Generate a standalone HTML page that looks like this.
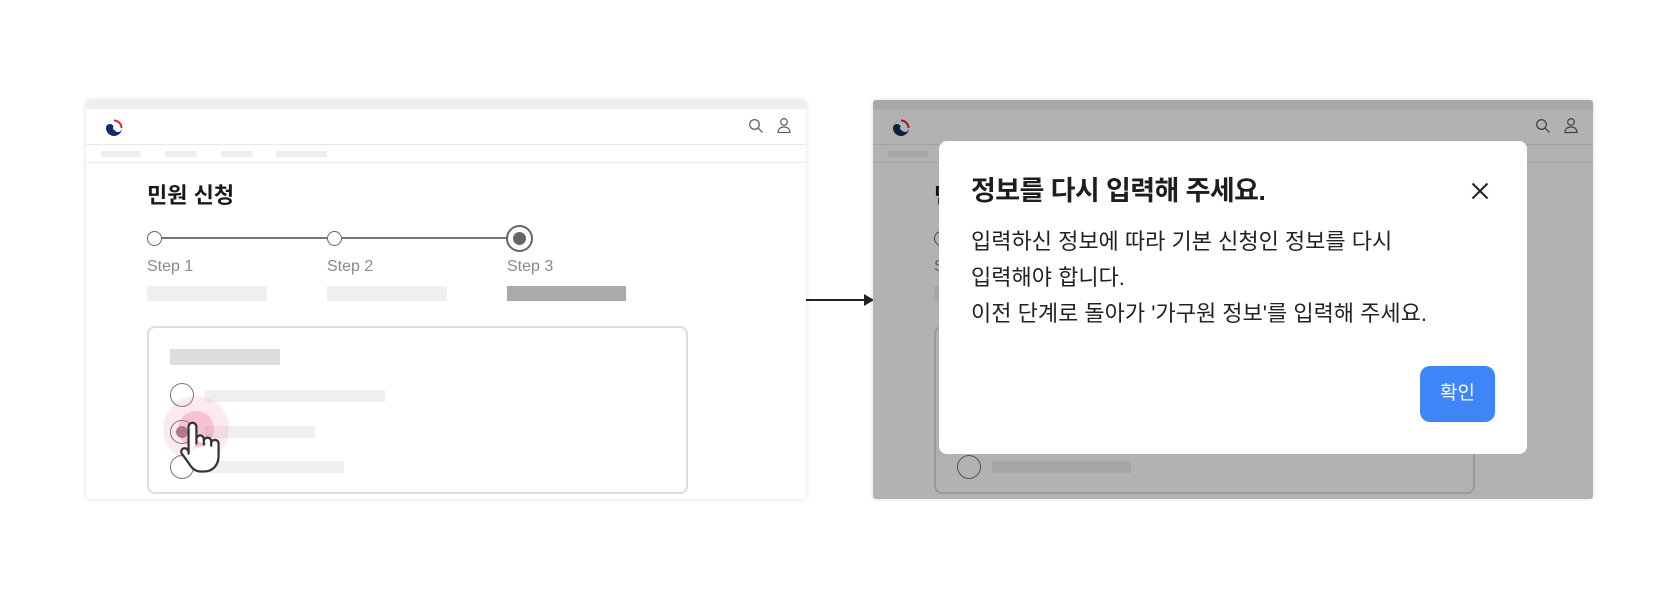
<!DOCTYPE html>
<html><head><meta charset="utf-8"><style>
*{margin:0;padding:0;box-sizing:border-box}
body{width:1680px;height:600px;background:#fff;position:relative;overflow:hidden;font-family:"Liberation Sans","Noto Sans CJK KR",sans-serif}
.panel{position:absolute;top:100px;width:720px;height:399px;background:#fff;box-shadow:0 0 6px rgba(0,0,0,.12);border-radius:3px;overflow:hidden}
.a{position:absolute}
.bar{position:absolute;background:#eee}
.rad{position:absolute;width:24px;height:24px;border:1.5px solid #777;border-radius:50%;background:#fff}
.lbl{position:absolute;top:158px;font-size:16px;color:#8a8a8a}
.ov{position:absolute;inset:0;background:rgba(0,0,0,.3)}
</style></head><body>

<div class="panel" style="left:86px">
  <div class="a" style="left:0;top:0;width:720px;height:9px;background:#efefef"></div>
  <div class="a" style="left:0;top:44px;width:720px;height:1px;background:#e8e8e8"></div>
  <div class="a" style="left:0;top:62px;width:720px;height:1px;background:#e8e8e8"></div>
  <svg class="a" style="left:19px;top:19px" width="18" height="18" viewBox="0 0 18 18"><circle cx="9" cy="9" r="8" fill="#0f2f66"/><path d="M9 1a8 8 0 0 1 8 8a4 4 0 0 1-8 0a4 4 0 0 0-8 0a8 8 0 0 1 8-8z" fill="#fff"/><path d="M9 1.5a7.5 7.5 0 0 1 7.5 7.5" stroke="#d42a3d" stroke-width="2" fill="none"/><circle cx="10.5" cy="9" r="2.5" fill="#fff"/></svg>
  <svg class="a" style="left:662px;top:18px" width="16" height="16" viewBox="0 0 16 16" fill="none" stroke="#666" stroke-width="1.3"><circle cx="6.5" cy="6.5" r="4.8"/><path d="M10 10l4.5 4.5"/></svg>
  <svg class="a" style="left:690px;top:17px" width="16" height="17" viewBox="0 0 16 17" fill="none" stroke="#666" stroke-width="1.3"><circle cx="8" cy="5" r="3.3"/><path d="M2 15.5c0-3.5 2.5-5.5 6-5.5s6 2 6 5.5z"/></svg>
  <div class="bar" style="left:15px;top:51px;width:40px;height:6px"></div>
  <div class="bar" style="left:79px;top:51px;width:32px;height:6px"></div>
  <div class="bar" style="left:135px;top:51px;width:32px;height:6px"></div>
  <div class="bar" style="left:190px;top:51px;width:51px;height:6px"></div>
  <div class="a" style="left:61px;top:82px;font-size:22px;font-weight:bold;color:#1a1a1a;line-height:28px">민원 신청</div>
  <div class="a" style="left:68px;top:137px;width:365px;height:2px;background:#777"></div>
  <div class="a" style="left:61px;top:131px;width:15px;height:15px;border:1.5px solid #666;border-radius:50%;background:#fff"></div>
  <div class="a" style="left:241px;top:131px;width:15px;height:15px;border:1.5px solid #666;border-radius:50%;background:#fff"></div>
  <div class="a" style="left:420px;top:125px;width:27px;height:27px;border:2px solid #666;border-radius:50%;background:#fff"></div>
  <div class="a" style="left:427px;top:132px;width:13px;height:13px;border-radius:50%;background:#666"></div>
  <div class="lbl" style="left:61px">Step 1</div>
  <div class="lbl" style="left:241px">Step 2</div>
  <div class="lbl" style="left:421px">Step 3</div>
  <div class="bar" style="left:61px;top:186px;width:120px;height:15px;background:#efefef"></div>
  <div class="bar" style="left:241px;top:186px;width:120px;height:15px;background:#efefef"></div>
  <div class="bar" style="left:421px;top:186px;width:119px;height:15px;background:#aaa"></div>
  <div class="a" style="left:61px;top:226px;width:541px;height:168px;border:2px solid #ddd;border-radius:8px"></div>
  <div class="bar" style="left:84px;top:249px;width:110px;height:16px;background:#ddd"></div>
  <div class="bar" style="left:119px;top:290px;width:180px;height:12px;background:#efefef"></div>
  <div class="bar" style="left:119px;top:326px;width:110px;height:12px;background:#efefef"></div>
  <div class="bar" style="left:119px;top:361px;width:139px;height:12px;background:#efefef"></div>
  <div class="rad" style="left:84px;top:283px"></div>
  <div class="rad" style="left:84px;top:320px"></div>
  <div class="rad" style="left:84px;top:355px"></div>
  <div class="a" style="left:77px;top:296px;width:66px;height:66px;border-radius:50%;background:rgba(240,120,160,.16)"></div>
  <div class="a" style="left:92px;top:311px;width:36px;height:36px;border-radius:50%;background:rgba(235,110,150,.3)"></div>
  <div class="a" style="left:90px;top:326px;width:12px;height:12px;border-radius:50%;background:#b07a8e"></div>
  <svg class="a" style="left:92px;top:320px" width="48" height="56" viewBox="0 0 40 50"><path d="M8 30V6a3.5 3.5 0 0 1 7 0v15 M15 17a3.3 3.3 0 0 1 6.6 0v5 M21.6 19a3.3 3.3 0 0 1 6.6 0v4 M28.2 21a3.3 3.3 0 0 1 6.6 0v11c0 8-5 14-13 14h-3c-5 0-8-3-11-8L2 30a3 3 0 0 1 5-3.5l1 1.5" fill="#fff" stroke="#333" stroke-width="2" stroke-linejoin="round" stroke-linecap="round"/></svg>
</div>

<div class="a" style="left:806px;top:299px;width:60px;height:2px;background:#222"></div>
<svg class="a" style="left:864px;top:294px" width="10" height="12" viewBox="0 0 10 12"><path d="M0 0L10 6L0 12z" fill="#222"/></svg>

<div class="panel" style="left:873px">
  <div class="a" style="left:0;top:0;width:720px;height:9px;background:#efefef"></div>
  <div class="a" style="left:0;top:44px;width:720px;height:1px;background:#e8e8e8"></div>
  <div class="a" style="left:0;top:62px;width:720px;height:1px;background:#e8e8e8"></div>
  <svg class="a" style="left:19px;top:19px" width="18" height="18" viewBox="0 0 18 18"><circle cx="9" cy="9" r="8" fill="#0f2f66"/><path d="M9 1a8 8 0 0 1 8 8a4 4 0 0 1-8 0a4 4 0 0 0-8 0a8 8 0 0 1 8-8z" fill="#fff"/><path d="M9 1.5a7.5 7.5 0 0 1 7.5 7.5" stroke="#d42a3d" stroke-width="2" fill="none"/><circle cx="10.5" cy="9" r="2.5" fill="#fff"/></svg>
  <svg class="a" style="left:662px;top:18px" width="16" height="16" viewBox="0 0 16 16" fill="none" stroke="#666" stroke-width="1.3"><circle cx="6.5" cy="6.5" r="4.8"/><path d="M10 10l4.5 4.5"/></svg>
  <svg class="a" style="left:690px;top:17px" width="16" height="17" viewBox="0 0 16 17" fill="none" stroke="#666" stroke-width="1.3"><circle cx="8" cy="5" r="3.3"/><path d="M2 15.5c0-3.5 2.5-5.5 6-5.5s6 2 6 5.5z"/></svg>
  <div class="bar" style="left:15px;top:51px;width:40px;height:6px"></div>
  <div class="a" style="left:61px;top:82px;font-size:22px;font-weight:bold;color:#1a1a1a;line-height:28px">민원 신청</div>
  <div class="lbl" style="left:61px">Step 1</div>
  <div class="a" style="left:61px;top:131px;width:15px;height:15px;border:1.5px solid #666;border-radius:50%;background:#fff"></div>
  <div class="bar" style="left:61px;top:186px;width:120px;height:15px;background:#efefef"></div>
  <div class="a" style="left:61px;top:226px;width:541px;height:168px;border:2px solid #ddd;border-radius:8px"></div>
  <div class="bar" style="left:119px;top:361px;width:139px;height:12px;background:#efefef"></div>
  <div class="rad" style="left:84px;top:355px"></div>
  <div class="ov"></div>
  <div class="a" style="left:66px;top:41px;width:588px;height:313px;background:#fff;border-radius:8px">
    <div class="a" style="left:32px;top:32px;font-size:27px;font-weight:bold;color:#1e1e1e;line-height:36px;letter-spacing:-0.6px">정보를 다시 입력해 주세요.</div>
    <svg class="a" style="left:532px;top:41px" width="18" height="18" viewBox="0 0 18 18"><path d="M1.5 1.5l15 15M16.5 1.5l-15 15" stroke="#222" stroke-width="2"/></svg>
    <div class="a" style="left:32px;top:83px;font-size:22px;color:#222;line-height:36px;letter-spacing:0px">입력하신 정보에 따라 기본 신청인 정보를 다시<br>입력해야 합니다.<br>이전 단계로 돌아가 '가구원 정보'를 입력해 주세요.</div>
    <div class="a" style="left:481px;top:225px;width:75px;height:56px;background:#3f85f7;border-radius:10px;color:#fff;font-size:19px;text-align:center;line-height:56px">확인</div>
  </div>
</div>
</body></html>
